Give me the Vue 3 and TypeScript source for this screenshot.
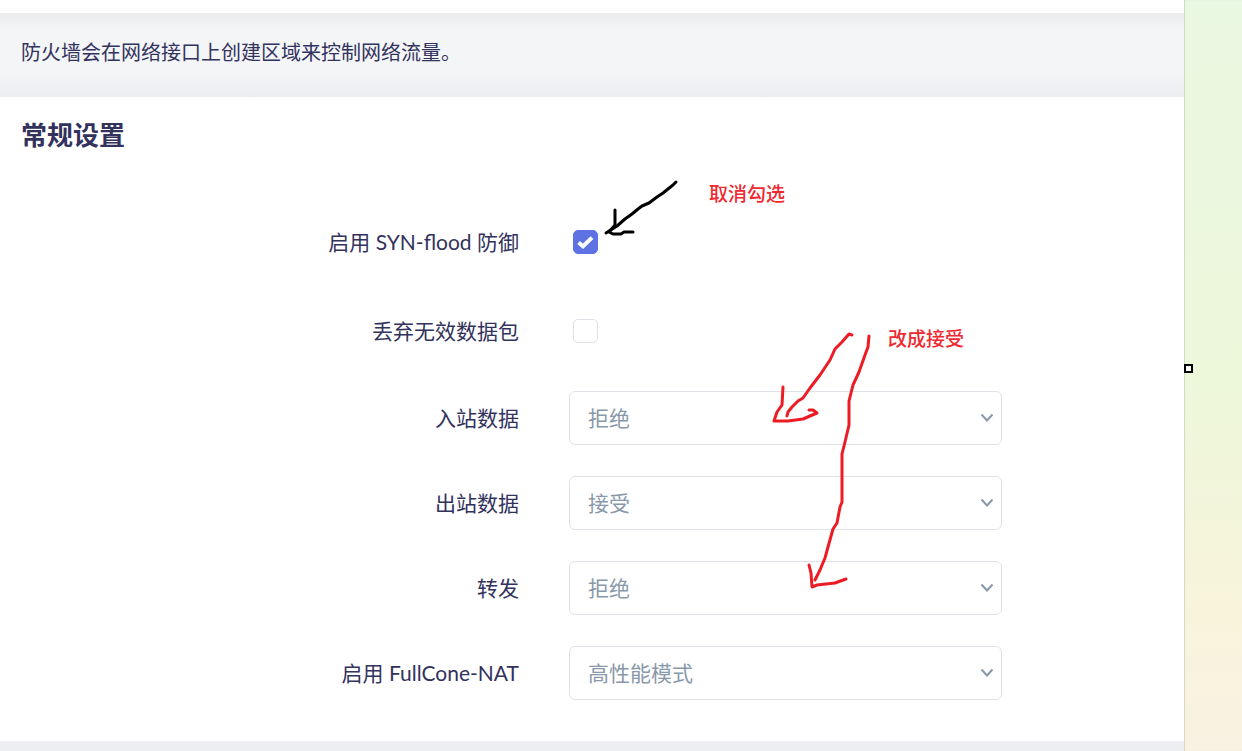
<script setup lang="ts">
import { ref } from 'vue'

interface Toggle {
  id: string
  label: string
  checked: boolean
}

interface Choice {
  id: string
  label: string
  value: string
  options: string[]
}

const policies = ['拒绝', '接受', '丢弃']

const toggles = ref<Toggle[]>([
  { id: 'syn-flood', label: '启用 SYN-flood 防御', checked: true },
  { id: 'drop-invalid', label: '丢弃无效数据包', checked: false },
])

const choices = ref<Choice[]>([
  { id: 'input', label: '入站数据', value: '拒绝', options: policies },
  { id: 'output', label: '出站数据', value: '接受', options: policies },
  { id: 'forward', label: '转发', value: '拒绝', options: policies },
  { id: 'fullcone', label: '启用 FullCone-NAT', value: '高性能模式', options: ['高性能模式', '兼容模式', '禁用'] },
])
</script>

<template>
  <div class="page">
    <main class="main">
      <div class="topbar"></div>
      <p class="intro">防火墙会在网络接口上创建区域来控制网络流量。</p>
      <section class="card">
        <h2 class="title">常规设置</h2>
        <form class="form" @submit.prevent>
          <div v-for="t in toggles" :key="t.id" class="row toggle-row">
            <label class="label" :for="t.id">{{ t.label }}</label>
            <span class="check">
              <input :id="t.id" v-model="t.checked" class="box" type="checkbox" />
              <svg v-if="t.checked" class="tick" viewBox="0 0 17 14" aria-hidden="true">
                <path d="M1.6 7.4 6 11.2 15 2.6" />
              </svg>
            </span>
          </div>
          <div v-for="c in choices" :key="c.id" class="row">
            <label class="label" :for="c.id">{{ c.label }}</label>
            <span class="field">
              <select :id="c.id" v-model="c.value" class="select">
                <option v-for="o in c.options" :key="o">{{ o }}</option>
              </select>
              <svg class="chevron" viewBox="0 0 14 10" aria-hidden="true">
                <path d="M1.5 1.5 7 7.5 12.5 1.5" />
              </svg>
            </span>
          </div>
        </form>
      </section>
    </main>
    <aside class="side"></aside>

    <div class="notes">
      <svg class="ink" width="1000" height="700" viewBox="0 0 1000 700" aria-hidden="true">
        <g class="black">
          <path d="M676 182 673 185 663 193 657 197 649 203 642 206 638 209 632 214 625 219 617 226 606 233" />
          <path d="M615 210V225L609 232 613 234H621L624 232H633" />
        </g>
        <g class="red">
          <path d="M852 335 849 334 842 342 835 349 830 360 820 375 810 388 803 398 798 401 792 407 788 412 787 416" />
          <path d="M783 387 782 405 777 412 774 421H788L803 419 817 413 813 410H809" />
          <path d="M869 336 868 347 865 355 859 372 853 385 849 401V425L845 442 842 454V502L840 507 837 523 833 529 828 547 825 558 820 570 815 580" />
          <path d="M809 565 811 573 812 587 817 585 835 583 846 579" />
        </g>
      </svg>
      <p class="note note-uncheck">取消勾选</p>
      <p class="note note-accept">改成接受</p>
      <span class="handle"></span>
    </div>
  </div>
</template>

<style>
body {
  margin: 0;
}
</style>

<style scoped>
.page {
  position: relative;
  display: flex;
  min-height: 100vh;
  overflow: hidden;
  color: #32325d;
  font-family: Lato, "Noto Sans CJK SC", sans-serif;
  font-size: 21px;
}

.main {
  flex: 1;
  background: #edeef1;
}

.topbar {
  height: 13px;
  background: #fff;
}

.intro {
  margin: 0;
  padding: 24px 21px 30px;
  background: linear-gradient(#ebecee 0, #f3f5f7 18px, #f4f5f7 60px, #ecedf0 100%);
  font-size: 20px;
  line-height: 30px;
}

.card {
  padding: 22px 0 41px;
  background: #fff;
}

.title {
  margin: 0 21px 62px;
  font-size: 26px;
  font-weight: 700;
  line-height: 32px;
}

.form {
  display: grid;
  gap: 31px;
}

.row {
  display: grid;
  grid-template-columns: 519fr 433fr 132fr;
  column-gap: 50px;
  align-items: center;
}

.toggle-row {
  min-height: 58px;
}

.label {
  line-height: 30px;
  text-align: right;
}

.check {
  position: relative;
  display: flex;
  width: 25px;
  height: 24px;
  margin-left: 4px;
}

.box {
  width: 100%;
  height: 100%;
  margin: 0;
  border: 1px solid #dee2e6;
  border-radius: 5px;
  background: #fff;
  appearance: none;
}

.box:checked {
  border-color: #5e72e4;
  background: #5e72e4;
}

.tick {
  position: absolute;
  top: 5px;
  left: 4px;
  width: 17px;
  height: 14px;
  fill: none;
  stroke: #fff;
  stroke-width: 4;
  pointer-events: none;
}

.field {
  position: relative;
  display: block;
}

.select {
  display: block;
  width: 100%;
  height: 54px;
  padding: 0 32px 2px 18px;
  border: 1px solid #dee2e6;
  border-radius: 6px;
  background: #fff;
  color: #8898aa;
  font: inherit;
  appearance: none;
}

.chevron {
  position: absolute;
  top: 22px;
  right: 8px;
  width: 14px;
  height: 10px;
  fill: none;
  stroke: #8898aa;
  stroke-width: 2;
  pointer-events: none;
}

.side {
  width: 58px;
  background: linear-gradient(#e9f8e2 0, #edf7da 50%, #f8f4dc 83%, #f9f1e2 100%);
  box-shadow: inset 1px 0 1px rgba(0, 0, 0, 0.12);
}

/* Hand-drawn marks lying over the form */
.notes {
  position: absolute;
  inset: 0;
  pointer-events: none;
}

.ink {
  position: absolute;
  top: 0;
  left: 0;
  fill: none;
  stroke-width: 3;
  stroke-linecap: round;
  stroke-linejoin: round;
}

.black {
  stroke: #000;
}

.red {
  stroke: #ed1c24;
}

.note {
  position: absolute;
  margin: 0;
  color: #f0282f;
  font-size: 19px;
  font-weight: 500;
  line-height: 28px;
}

.note-uncheck {
  top: 180px;
  left: 709px;
}

.note-accept {
  top: 325px;
  left: 888px;
}

.handle {
  position: absolute;
  top: 364px;
  right: 49px;
  box-sizing: border-box;
  width: 9px;
  height: 9px;
  border: 2px solid #000;
  background: #fff;
}
</style>
